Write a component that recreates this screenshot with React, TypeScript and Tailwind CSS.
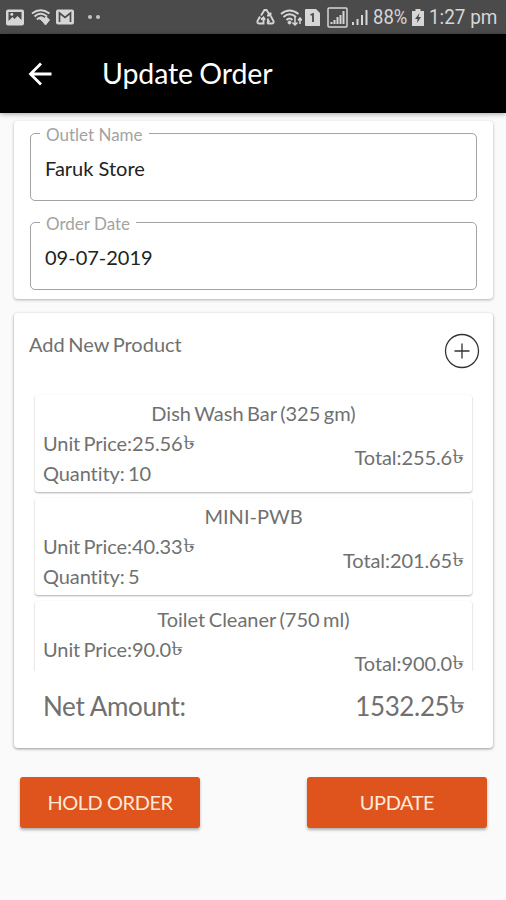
import React from "react";

type Product = { name: string; price: string; quantity?: string; total: string };

const products: Product[] = [
  { name: "Dish Wash Bar (325 gm)", price: "25.56", quantity: "10", total: "255.6" },
  { name: "MINI-PWB", price: "40.33", quantity: "5", total: "201.65" },
  { name: "Toilet Cleaner (750 ml)", price: "90.0", total: "900.0" },
];

function StatusBar() {
  return (
    <div className="flex h-[34px] items-center bg-[#4b4b4b] pl-[6px] text-[#d6d6d6] [&>*]:shrink-0">
      <svg className="h-[17px] w-[18px]" viewBox="0 0 18 17">
        <rect width="18" height="16" y=".5" rx="2" fill="currentColor" />
        <path d="M2.500 3h13v8l-4-4-3 3-2-2-4 4Z" fill="#4b4b4b" />
        <circle cx="5.800" cy="5.300" r="1.500" fill="currentColor" />
      </svg>
      <svg className="ml-[7px] h-[18px] w-[20px]" viewBox="0 0 20 18" fill="none" stroke="currentColor">
        <path d="M1 5.500Q9.500-1 18.500 5.500M3.500 8.500Q9.500 3 16 8.500M6 11.500Q9.500 7.500 13 11" strokeWidth="2" />
        <path d="m8 11 2-1 6 6M15.500 9l3 3-4 5-4-5Z" fill="currentColor" strokeWidth="1" />
      </svg>
      <svg className="ml-[5px] h-[16px] w-[18px]" viewBox="0 0 18 16">
        <rect width="18" height="15" y=".5" rx="2" fill="currentColor" />
        <path d="M3.500 13V4l5.500 4.500L14.500 4v9" fill="none" stroke="#4b4b4b" strokeWidth="1.700" />
      </svg>
      <span className="ml-[14px] size-[4px] rounded-full bg-[#c4c4c4]" />
      <span className="ml-[4px] size-[4px] rounded-full bg-[#c4c4c4]" />
      <svg className="ml-[156px] h-[18px] w-[19px]" viewBox="0 0 19 18" fill="none" stroke="currentColor" strokeWidth="1.900">
        <path d="M5 7.500 8.500 2h2L14 7.500M11 7.500h3.500V4.500M4 8.500 1.500 13Q.8 15.500 3.500 15.500H7.500V10M5 11.500l2.500-2 1.500 2.500M15 8.500l2.500 4.500Q18.200 15.500 15.500 15.500H11.500M13.500 12.500l-2.500 3M12 10.500v5" />
      </svg>
      <svg className="ml-[5px] h-[19px] w-[22px]" viewBox="0 0 22 19" fill="none" stroke="currentColor">
        <path d="M1 6Q9.500-1 18.500 6M3.500 9Q9.500 3.500 16 9M6.500 12Q9.500 9 12.500 12" strokeWidth="2" />
        <circle cx="9.500" cy="14.500" r="1.500" fill="currentColor" />
        <path d="M15 9v8m-2.500-2.500L15 17l2.500-2.500M20 16V10m-2 2.500 2-2.500 2 2.500" strokeWidth="1.500" />
      </svg>
      <svg className="ml-[3px] h-[17px] w-[15px]" viewBox="0 0 15 17">
        <path d="M1 0h10l4 4v13H1Q0 17 0 16V1Q0 0 1 0Z" fill="currentColor" />
        <path d="M5.500 6 8 5v8" fill="none" stroke="#4b4b4b" strokeWidth="1.800" />
      </svg>
      <svg className="ml-[7px] h-[21px] w-[21px]" viewBox="0 0 21 21" fill="none" stroke="currentColor">
        <rect x="1" y="1" width="19" height="19" rx="1" strokeWidth="1.500" />
        <path d="M4.500 17v-2M7.500 17v-4M10.500 17v-7M13.500 17V8M16.500 17V4" strokeWidth="2" />
      </svg>
      <svg className="ml-[3px] h-[18px] w-[17px]" viewBox="0 0 17 18" fill="none" stroke="currentColor" strokeWidth="2">
        <path d="M2 17v-3M6.500 17v-6M11 17V7M15.500 17V2" />
      </svg>
      <span className="ml-[5px] w-[34px] origin-left scale-x-[.88] whitespace-nowrap font-[Roboto] text-[21px] leading-none">88%</span>
      <svg className="ml-[5px] h-[17px] w-[12px]" viewBox="0 0 12 17">
        <path d="M3.500 2V0h5v2H12v15H0V2Z" fill="currentColor" />
        <path d="M7.500 4 3 10h2.500L5 14l4-6H6.500Z" fill="#4b4b4b" />
      </svg>
      <span className="ml-[5px] w-[68px] origin-left scale-x-[.9] whitespace-nowrap font-[Roboto] text-[21px] leading-none">1:27 pm</span>
    </div>
  );
}

function Taka() {
  return <span className="mr-[2px] inline-block origin-left -translate-y-[2px] scale-x-125 scale-y-95">৳</span>;
}

function Field({ label, value }: { label: string; value: string }) {
  return (
    <div className="h-[68px] rounded-[5px] border border-[#a3a3a3]">
      <span className="-mt-[10px] ml-[9px] block w-fit bg-white px-[6px] text-[17px] leading-[22px] text-[#a3a3a3]">{label}</span>
      <span className="ml-[14px] mt-[10px] block text-[20px] leading-[24px] text-[#222]">{value}</span>
    </div>
  );
}

function ProductCard({ product }: { product: Product }) {
  return (
    <div className="h-[97px] shrink-0 rounded-[3px] bg-white px-[8px] pt-[4px] text-[20px] [word-spacing:-1.600px] shadow-[0_1px_2px_rgba(0,0,0,0.32)]">
      <div className="text-center leading-[29px]">{product.name}</div>
      <div className="flex h-[60px] items-center justify-between tracking-[-0.090px]">
        <div className="h-[60px] leading-[30px]">
          <div>Unit Price:{product.price}<Taka /></div>
          {product.quantity && <div>Quantity: {product.quantity}</div>}
        </div>
        <div className="-mt-[3px] leading-[30px]">Total:{product.total}<Taka /></div>
      </div>
    </div>
  );
}

export default function App() {
  return (
    <div className="flex h-[900px] w-[506px] flex-col overflow-hidden bg-[#fafafa] font-[Lato,'Noto_Sans',sans-serif] text-[#707070] [font-variant-ligatures:none]">
      <StatusBar />
      <header className="flex h-[79px] items-center bg-black pl-[28px] text-white shadow-[0_1px_5px_rgba(0,0,0,0.35)]">
        <svg className="h-[24px] w-[24px]" viewBox="0 0 24 24" fill="none" stroke="currentColor" strokeWidth="2.800">
          <path d="M23.500 12H3M13 1.500 2.500 12 13 22.500" />
        </svg>
        <h1 className="-mt-[1px] ml-[50px] text-[28.500px] leading-none tracking-[-0.1px] [word-spacing:-1px]">Update Order</h1>
      </header>
      <section className="ml-[14px] mr-[13px] mt-[8px] flex h-[178px] flex-col gap-[21px] rounded-[4px] bg-white px-[16px] pt-[12px] shadow-[0_1px_3px_rgba(0,0,0,0.3)]">
        <Field label="Outlet Name" value="Faruk Store" />
        <Field label="Order Date" value="09-07-2019" />
      </section>
      <section className="ml-[14px] mr-[13px] mt-[14px] h-[435px] rounded-[4px] bg-white shadow-[0_1px_3px_rgba(0,0,0,0.4)]">
        <div className="flex h-[80px] justify-between pl-[15px] pr-[13px] pt-[20px]">
          <span className="-mt-[1px] text-[20px] leading-[24px] [word-spacing:-1.500px]">Add New Product</span>
          <svg className="h-[36px] w-[36px]" viewBox="0 0 36 36" fill="none" stroke="#333" strokeWidth="1.300">
            <circle cx="18" cy="18" r="16.500" />
            <path d="M10.500 18h15M18 10.500v15" />
          </svg>
        </div>
        <div className="mx-[18px] flex h-[278px] flex-col gap-[6px] overflow-hidden px-[3px] pt-[2px]">
          {products.map((p) => <ProductCard key={p.name} product={p} />)}
        </div>
        <div className="flex justify-between px-[29px] pt-[19px] text-[26px] leading-[32px] tracking-[-0.350px]">
          <span>Net Amount:</span>
          <span>1532.25<Taka /></span>
        </div>
      </section>
      <div className="ml-[20px] mr-[19px] mt-[29px] flex justify-between text-[20px] text-[#ffe9d9] [word-spacing:-3px]">
        <button className="h-[51px] w-[180px] rounded-[3px] bg-[#df531d] pb-[2px] tracking-[-0.450px] shadow-[0_2px_3px_rgba(0,0,0,0.3)]">HOLD ORDER</button>
        <button className="h-[51px] w-[180px] rounded-[3px] bg-[#df531d] pb-[2px] tracking-[-0.450px] shadow-[0_2px_3px_rgba(0,0,0,0.3)]">UPDATE</button>
      </div>
    </div>
  );
}
